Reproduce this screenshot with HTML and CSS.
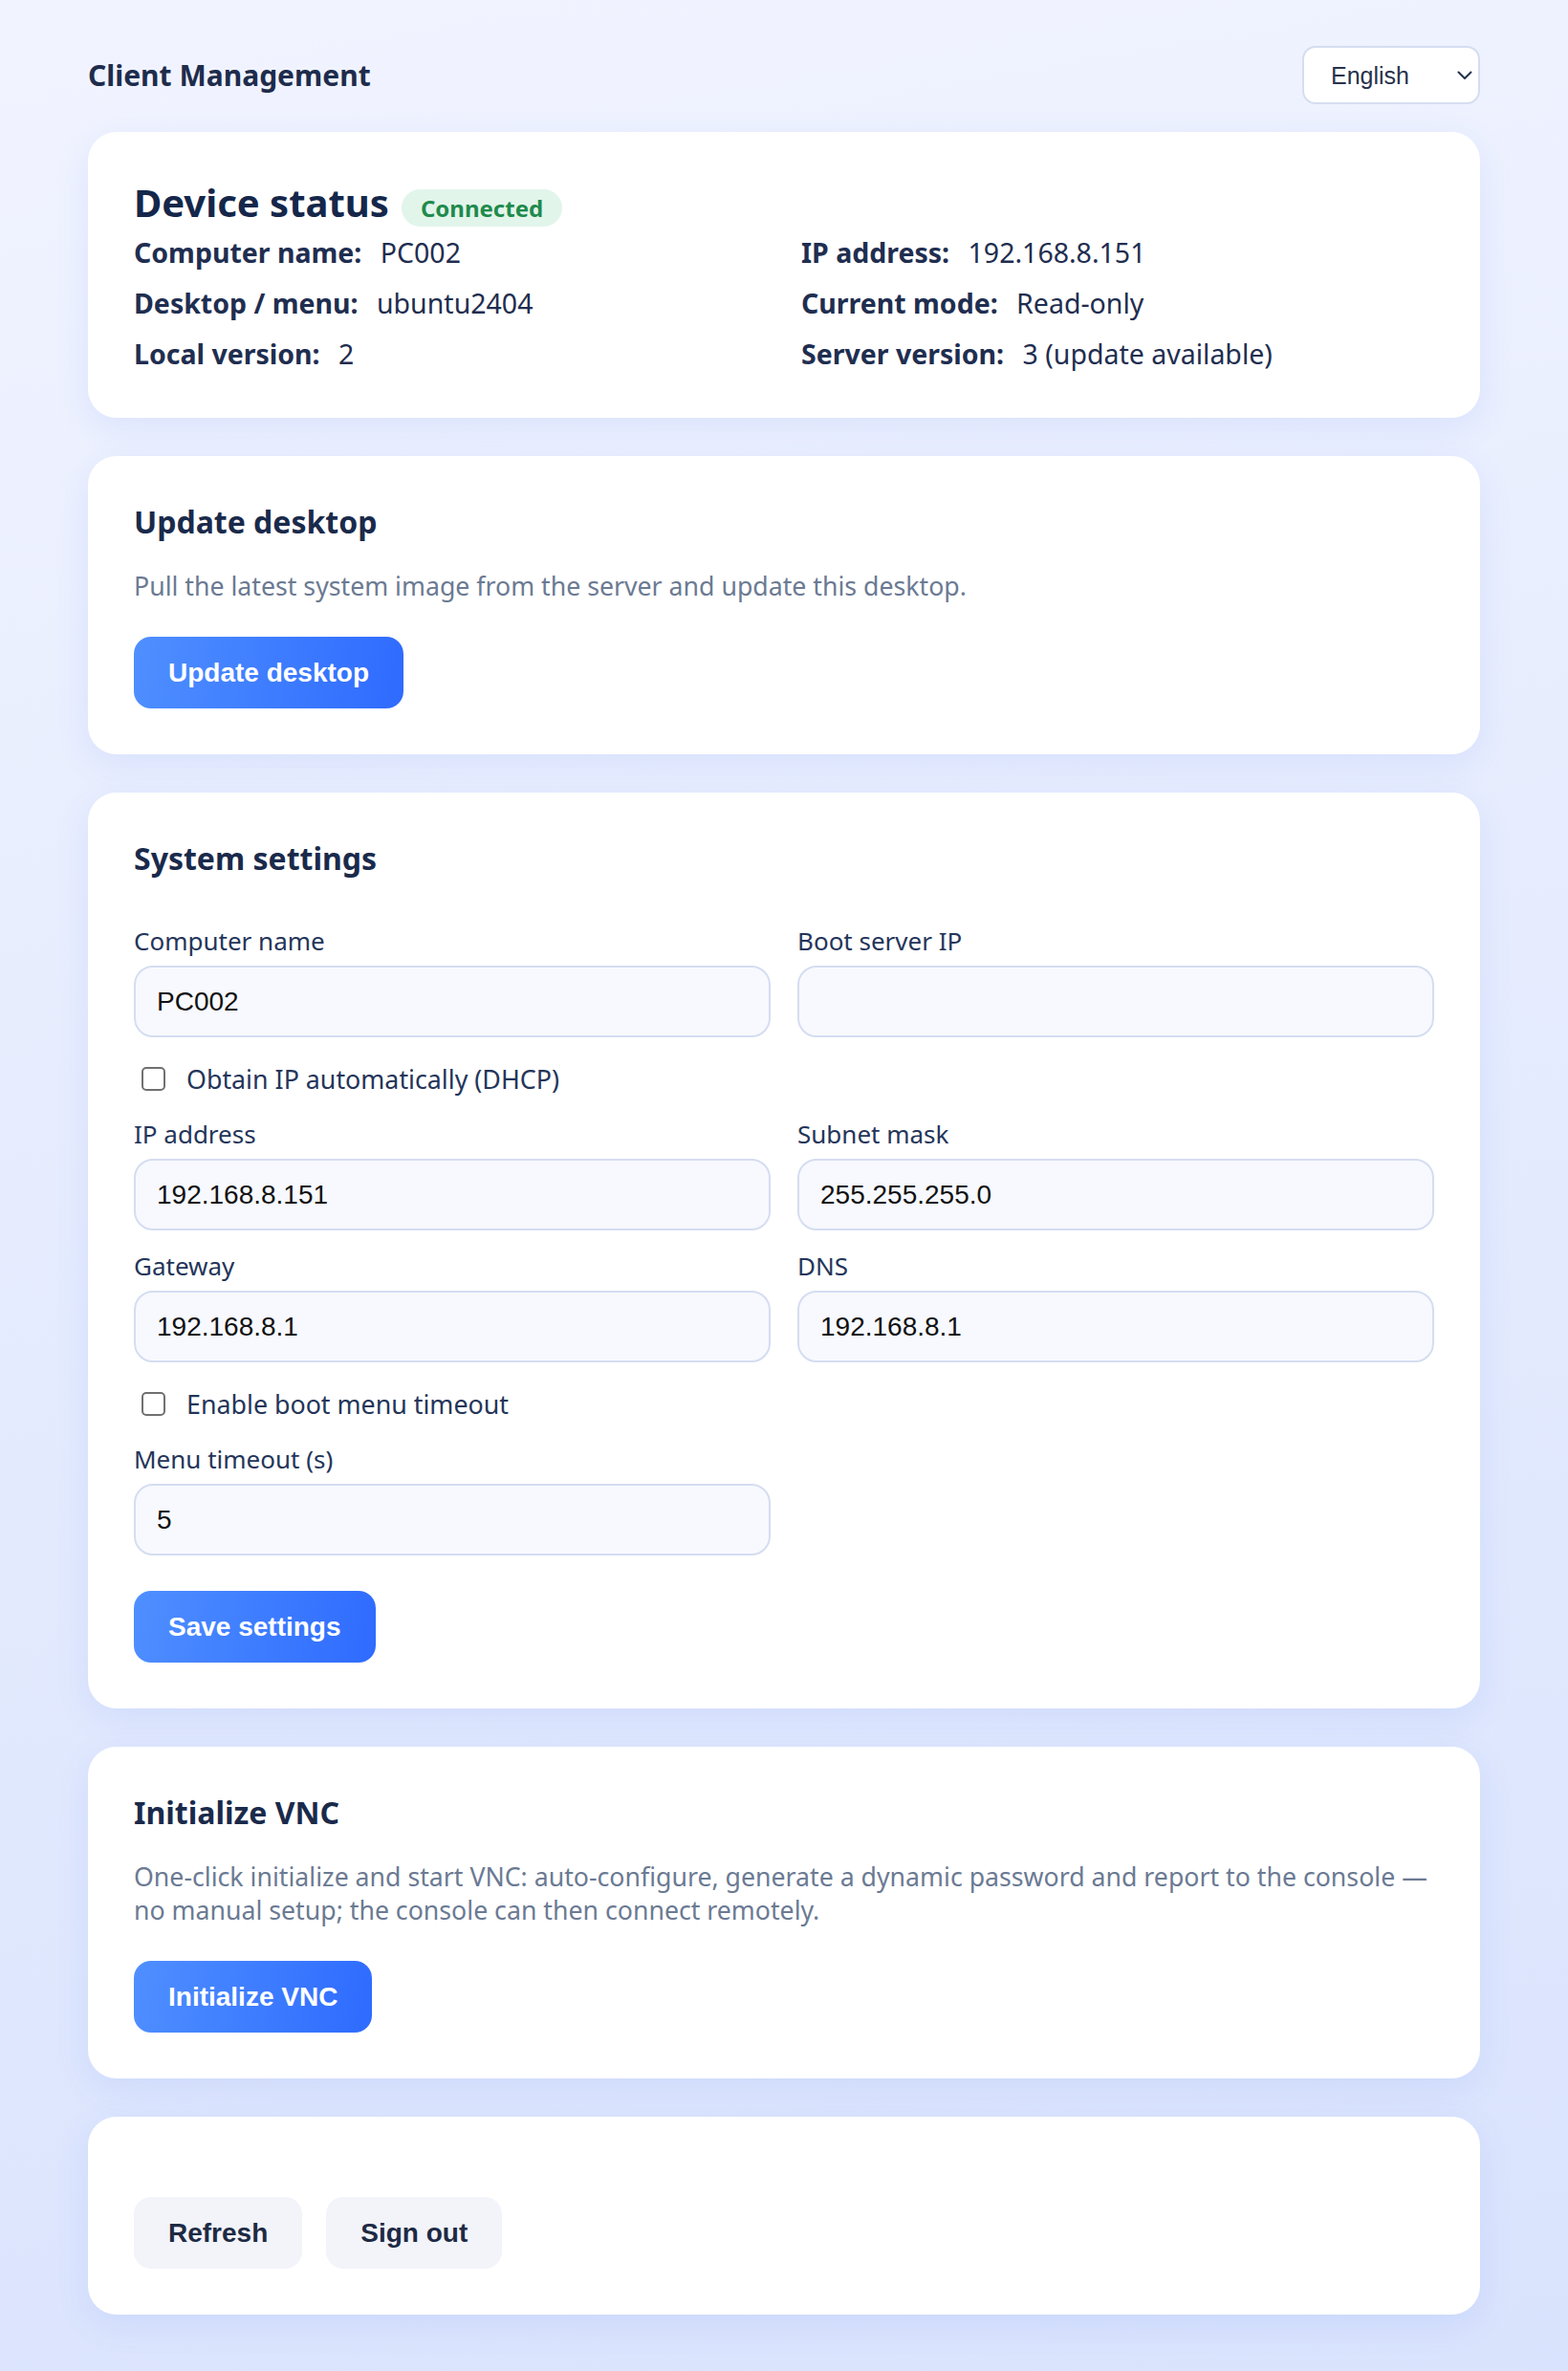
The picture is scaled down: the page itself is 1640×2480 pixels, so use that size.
FILE: index.html
```html
<!DOCTYPE html>
<html lang="en">
<head>
    <meta charset="UTF-8">
    <meta name="viewport" content="width=device-width, initial-scale=1.0">
    <title>Client Management</title>
    <link rel="stylesheet" href="styles.css">
</head>
<body>
    <div class="page">
        <header class="topbar">
            <h1>Client Management</h1>
            <div class="lang">
                <select id="lang">
                    <option>English</option>
                    <option>中文</option>
                </select>
                <svg class="lang-arrow" width="16" height="10" viewBox="0 0 16 10">
                    <path d="M1.5 1.5 L8 8 L14.5 1.5" fill="none" stroke="#27324c" stroke-width="2" stroke-linecap="round" stroke-linejoin="round"/>
                </svg>
            </div>
        </header>

        <section class="card status-card">
            <div class="status-head">
                <h2>Device status</h2>
                <span class="badge">Connected</span>
            </div>
            <div class="info-grid">
                <div class="info-row"><b>Computer name:</b> <span>PC002</span></div>
                <div class="info-row"><b>IP address:</b> <span>192.168.8.151</span></div>
                <div class="info-row"><b>Desktop / menu:</b> <span>ubuntu2404</span></div>
                <div class="info-row"><b>Current mode:</b> <span>Read-only</span></div>
                <div class="info-row"><b>Local version:</b> <span>2</span></div>
                <div class="info-row"><b>Server version:</b> <span>3 (update available)</span></div>
            </div>
        </section>

        <section class="card">
            <h2>Update desktop</h2>
            <p class="desc">Pull the latest system image from the server and update this desktop.</p>
            <button class="btn btn-primary" type="button">Update desktop</button>
        </section>

        <section class="card">
            <h2>System settings</h2>
            <form class="form-grid" id="settingsForm">
                <div class="field">
                    <label for="hostname">Computer name</label>
                    <input type="text" id="hostname" value="PC002">
                </div>
                <div class="field">
                    <label for="bootServer">Boot server IP</label>
                    <input type="text" id="bootServer" value="">
                </div>
                <label class="check-row">
                    <input type="checkbox" id="dhcp">
                    <span>Obtain IP automatically (DHCP)</span>
                </label>
                <div class="field">
                    <label for="ip">IP address</label>
                    <input type="text" id="ip" value="192.168.8.151">
                </div>
                <div class="field">
                    <label for="mask">Subnet mask</label>
                    <input type="text" id="mask" value="255.255.255.0">
                </div>
                <div class="field">
                    <label for="gateway">Gateway</label>
                    <input type="text" id="gateway" value="192.168.8.1">
                </div>
                <div class="field">
                    <label for="dns">DNS</label>
                    <input type="text" id="dns" value="192.168.8.1">
                </div>
                <label class="check-row">
                    <input type="checkbox" id="menuTimeoutOn">
                    <span>Enable boot menu timeout</span>
                </label>
                <div class="field">
                    <label for="menuTimeout">Menu timeout (s)</label>
                    <input type="text" id="menuTimeout" value="5">
                </div>
            </form>
            <button class="btn btn-primary btn-save" type="submit" form="settingsForm">Save settings</button>
        </section>

        <section class="card">
            <h2>Initialize VNC</h2>
            <p class="desc">One-click initialize and start VNC: auto-configure, generate a dynamic password and report to the console — no manual setup; the console can then connect remotely.</p>
            <button class="btn btn-primary" type="button">Initialize VNC</button>
        </section>

        <section class="card">
            <div class="msg"></div>
            <div class="actions">
                <button class="btn btn-light" type="button">Refresh</button>
                <button class="btn btn-light" type="button">Sign out</button>
            </div>
        </section>
    </div>
</body>
</html>
```

FILE: styles.css
```css
* {
    box-sizing: border-box;
}

body {
    margin: 0;
    min-height: 100vh;
    font-family: "Noto Sans", sans-serif;
    color: #1c2b4b;
    background: linear-gradient(170deg, #f1f4ff 0%, #e6ecfe 45%, #d9e3fd 100%);
}

.page {
    max-width: 1456px;
    margin: 0 auto;
    padding: 48px 0 56px;
}

.topbar {
    display: flex;
    justify-content: space-between;
    align-items: center;
    margin-bottom: 29px;
}

.topbar h1 {
    margin: 0;
    font-size: 30px;
    font-weight: 700;
    color: #1e2c4c;
}

.lang {
    position: relative;
}

.lang select {
    appearance: none;
    -webkit-appearance: none;
    width: 186px;
    height: 61px;
    padding: 0 40px 0 28px;
    font-family: "Liberation Sans", Arial, sans-serif;
    font-size: 25px;
    color: #27324c;
    background: #fff;
    border: 2px solid #d5ddf0;
    border-radius: 14px;
    outline: none;
}

.lang-arrow {
    position: absolute;
    right: 8px;
    top: 26px;
    pointer-events: none;
}

.card {
    background: #fff;
    border-radius: 30px;
    padding: 48px;
    margin-bottom: 40px;
    box-shadow: 0 10px 36px rgba(59, 110, 240, 0.10);
}

.card h2 {
    margin: 0 0 28px;
    font-size: 32px;
    line-height: 42px;
    font-weight: 700;
    color: #1a2a4b;
}

.status-card {
    padding-bottom: 43px;
}

.status-head {
    display: flex;
    align-items: baseline;
    gap: 13px;
    margin-bottom: 2px;
}

.status-card .status-head h2 {
    margin: 0;
    font-size: 40px;
    line-height: 52px;
    color: #15274a;
}

.badge {
    display: inline-block;
    padding: 5px 20px;
    font-size: 24px;
    line-height: 29px;
    font-weight: 700;
    color: #1f8a4c;
    background: #e2f5ea;
    border-radius: 999px;
}

.info-grid {
    display: grid;
    grid-template-columns: 1fr 1fr;
    column-gap: 36px;
    row-gap: 5px;
}

.info-row {
    font-size: 28.5px;
    line-height: 48px;
    color: #1f2e50;
}

.info-row b {
    margin-right: 12px;
}

.desc {
    margin: 0;
    font-size: 26.7px;
    line-height: 35px;
    color: #6b7a93;
}

.btn {
    height: 75px;
    padding: 0 36px;
    font-family: "Liberation Sans", Arial, sans-serif;
    font-size: 28px;
    font-weight: 700;
    border: none;
    border-radius: 18px;
    cursor: pointer;
}

.desc + .btn {
    margin-top: 36px;
}

.btn-primary {
    color: #fff;
    background: linear-gradient(100deg, #4f8fff 0%, #2e6bff 100%);
}

.btn-light {
    color: #1e2a44;
    background: #f2f4fa;
}

.form-grid {
    display: grid;
    grid-template-columns: 1fr 1fr;
    column-gap: 28px;
    row-gap: 22px;
    margin-top: 50px;
}

.field label {
    display: block;
    font-size: 26px;
    line-height: 30px;
    margin-bottom: 11px;
    color: #24355a;
}

.field input {
    width: 100%;
    height: 75px;
    padding: 0 22px;
    font-family: "Liberation Sans", Arial, sans-serif;
    font-size: 28px;
    color: #111;
    background: #f7f9fe;
    border: 2px solid #d5ddf1;
    border-radius: 20px;
    outline: none;
}

.check-row {
    grid-column: 1 / -1;
    display: flex;
    align-items: center;
    gap: 22px;
    height: 42px;
    padding-left: 8px;
    font-size: 26.8px;
    color: #24355a;
    cursor: pointer;
}

.check-row input {
    appearance: none;
    -webkit-appearance: none;
    width: 25px;
    height: 25px;
    margin: 0;
    border: 2px solid #707070;
    border-radius: 5px;
    background: #fff;
}

.check-row input:checked {
    background: #2e6bff;
    border-color: #2e6bff;
}

.btn-save {
    margin-top: 37px;
}

.msg {
    min-height: 0;
}

.actions {
    display: flex;
    gap: 25px;
    margin-top: 36px;
}
```
